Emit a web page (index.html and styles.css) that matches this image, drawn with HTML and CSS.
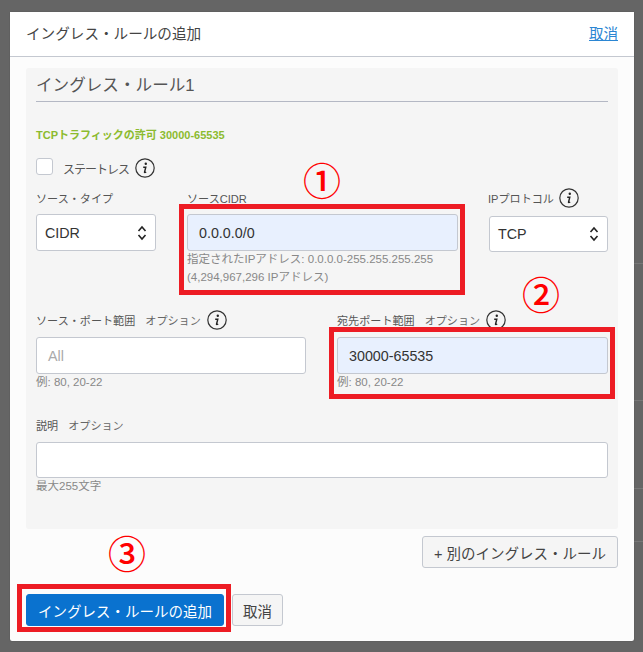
FILE: index.html
```html
<!DOCTYPE html>
<html lang="ja">
<head>
<meta charset="utf-8">
<title>イングレス・ルールの追加</title>
<link rel="stylesheet" href="styles.css">
</head>
<body>
<svg width="0" height="0" class="defs"><symbol id="info" viewBox="0 0 20 20"><circle cx="10" cy="10" r="9.200" fill="none" stroke="#333" stroke-width="1.200"/><circle cx="10.800" cy="5.800" r="1.200" fill="#222"/><path d="M8.200 9.200h2.600l-1.300 5c-.1.500.3.700 1.700-.2" fill="none" stroke="#222" stroke-width="1.400"/></symbol>
<symbol id="updown" viewBox="0 0 10 16"><path d="M1.500 6 5 2l3.500 4M1.500 10 5 14l3.500-4" fill="none" stroke="#222" stroke-width="1.600"/></symbol></svg>
<main class="modal">
  <header class="modal-head">
    <h1>イングレス・ルールの追加</h1>
    <a class="cancel-link" href="#">取消</a>
  </header>
  <section class="panel">
    <h2>イングレス・ルール1</h2>
    <p class="summary">TCPトラフィックの許可 30000-65535</p>
    <div class="stateless"><span class="check"></span><span class="lbl">ステートレス</span><svg class="i"><use href="#info"/></svg></div>
    <div class="row-three">
      <div class="field">
        <label>ソース・タイプ</label>
        <div class="input select">CIDR<svg class="ud"><use href="#updown"/></svg></div>
      </div>
      <div class="field">
        <label>ソースCIDR</label>
        <div class="input filled">0.0.0.0/0</div>
        <p class="help">指定されたIPアドレス: 0.0.0.0-255.255.255.255<br>(4,294,967,296 IPアドレス)</p>
      </div>
      <div class="field protocol">
        <label class="with-i">IPプロトコル<svg class="i"><use href="#info"/></svg></label>
        <div class="input select">TCP<svg class="ud"><use href="#updown"/></svg></div>
      </div>
    </div>
    <div class="row-two">
      <div class="field">
        <label class="with-i">ソース・ポート範囲<span class="opt">オプション</span><svg class="i"><use href="#info"/></svg></label>
        <div class="input placeholder">All</div>
        <p class="help">例: 80, 20-22</p>
      </div>
      <div class="field">
        <label class="with-i">宛先ポート範囲<span class="opt">オプション</span><svg class="i"><use href="#info"/></svg></label>
        <div class="input filled">30000-65535</div>
        <p class="help">例: 80, 20-22</p>
      </div>
    </div>
    <div class="field">
      <label class="with-i">説明<span class="opt">オプション</span></label>
      <div class="input short"></div>
      <p class="help">最大255文字</p>
    </div>
  </section>
  <div class="add-row"><button class="btn add">+ 別のイングレス・ルール</button></div>
  <footer class="modal-foot">
    <button class="btn primary">イングレス・ルールの追加</button>
    <button class="btn">取消</button>
  </footer>
</main>
<div class="mark box1"></div>
<div class="mark box2"></div>
<div class="mark box3"></div>
<span class="num n1">①</span>
<span class="num n2">②</span>
<span class="num n3">③</span>
</body>
</html>
```
FILE: styles.css
```css
* { box-sizing: border-box; }
html, body { margin: 0; height: 652px; overflow: hidden; }
body {
  position: relative;
  background:
    linear-gradient(#777, #777) 634px 263px / 9px 1px no-repeat,
    linear-gradient(#777, #777) 634px 400px / 9px 1px no-repeat,
    linear-gradient(#777, #777) 634px 488px / 9px 1px no-repeat,
    linear-gradient(#777, #777) 634px 541px / 9px 1px no-repeat,
    #656565;
  padding: 12px 9px 11px 10px;
  font-family: "Liberation Sans", "Noto Sans CJK JP", sans-serif;
  color: #333;
}
.defs { position: absolute; }
.modal {
  height: 629px;
  background: #fcfcfc;
  border-radius: 2px;
  box-shadow: 0 0 1px #333;
  padding: 0 16px;
}
.modal-head {
  display: flex;
  justify-content: space-between;
  align-items: center;
  height: 45px;
  margin: 0 -16px;
  padding: 0 16px 3px;
  background: #fff;
  border-bottom: 1px solid #c4c8d0;
}
h1 { margin: 0; font-size: 14.600px; font-weight: 400; color: #444; }
.cancel-link { color: #2b86d3; font-size: 14.500px; }
.panel {
  margin-top: 11px;
  height: 461px;
  background: #f5f5f5;
  border-radius: 3px;
  padding: 6px 10px 0;
}
h2 {
  margin: 0;
  height: 28px;
  font-size: 16.600px;
  line-height: 24px;
  font-weight: 400;
  color: #555;
  border-bottom: 1px solid #b4b8c4;
}
.summary { margin: 26px 0 0; font-size: 11px; line-height: 14px; font-weight: 700; color: #8cbb2f; }
.stateless { display: flex; align-items: center; height: 20px; margin-top: 16px; }
.check { width: 17px; height: 17px; margin: -3px 10px 0 0; background: #fff; border: 1px solid #c4c8d0; border-radius: 3px; }
.lbl { font-size: 12px; color: #555; letter-spacing: -1px; }
.i { width: 20px; height: 20px; flex: none; margin-left: 6px; }
.row-three { display: grid; grid-template-columns: 120px 271px 119px; column-gap: 31px; margin-top: 10px; height: 122px; }
.row-two { display: grid; grid-template-columns: 270px 271px; column-gap: 31px; height: 105px; }
.field { min-width: 0; }
label { display: flex; align-items: center; height: 20px; margin-bottom: 6px; font-size: 11.100px; color: #555; white-space: nowrap; }
.with-i { margin-bottom: 7px; }
.protocol .with-i { margin-bottom: 8px; margin-left: -1px; }
.protocol .i { margin-left: 5px; }
.protocol .input { height: 36px; }
.opt { margin-left: 10px; color: #666; }
.input {
  display: flex;
  align-items: center;
  justify-content: space-between;
  height: 37px;
  padding: 0 11px;
  background: #fff;
  border: 1px solid #c4c8d0;
  border-radius: 3px;
  font-size: 14.300px;
  color: #333;
}
.select { padding: 0 8px; }
.short { height: 36px; }
.filled { background: #e8f0fe; }
.placeholder { color: #aaa; }
.ud { width: 10px; height: 16px; }
.help { margin: -1px 0 0; font-size: 11.500px; line-height: 18px; color: #888; }
.add-row { display: flex; justify-content: flex-end; margin-top: 7px; }
.btn {
  height: 32px;
  padding: 0 10px;
  background: #f5f5f5;
  border: 1px solid #c4c8d0;
  border-radius: 3px;
  font: 14.500px "Liberation Sans", "Noto Sans CJK JP", sans-serif;
  color: #444;
}
.add { padding: 0 11px; }
.modal-foot { display: flex; gap: 8px; margin-top: 26px; }
.primary { width: 198px; background: #0a72cf; border-color: #0a72cf; color: #fff; }
.mark { position: absolute; border: 5px solid #ed1c24; }
.box1 { left: 179px; top: 204px; width: 286px; height: 91px; }
.box2 { left: 329px; top: 327px; width: 286px; height: 72px; }
.box3 { left: 17px; top: 584px; width: 214px; height: 48px; }
.num { position: absolute; color: #f00; font: 500 38px/40px "Noto Sans CJK JP", sans-serif; }
.n1 { left: 303px; top: 159px; }
.n2 { left: 522px; top: 273px; }
.n3 { left: 108px; top: 532px; }
```
